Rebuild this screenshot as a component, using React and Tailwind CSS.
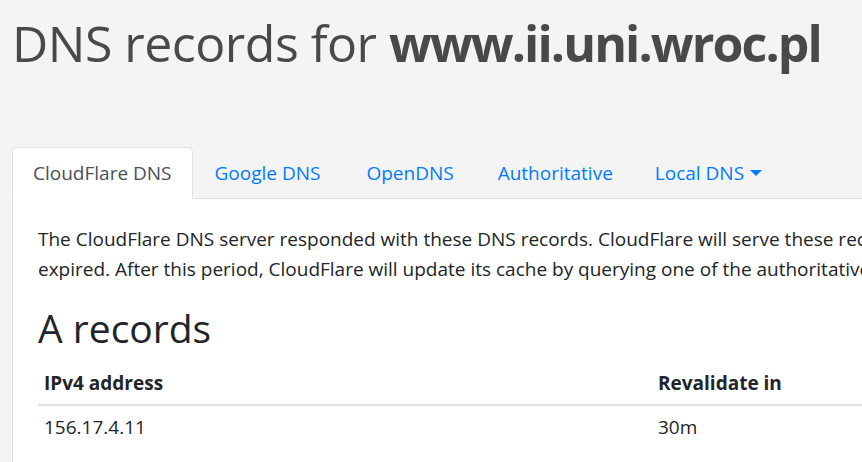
import React from "react";

export default function App() {
  return (
    <div
      className="w-full min-h-[462px] h-[462px] overflow-hidden bg-[#f4f4f4] text-[#212529]"
      style={{ fontFamily: '"Open Sans", "Noto Sans", sans-serif' }}
    >
      <div className="pl-[12px] w-[1200px]">
        <h1 className="pt-[15px] text-[50px] leading-[57px] text-[#494949] font-normal tracking-[-0.5px]">
          DNS records for <span className="font-bold tracking-[-1.9px]">www.ii.uni.wroc.pl</span>
        </h1>

        <ul className="mt-[75px] flex border-b border-[#dee2e6] text-[19px] leading-[30px]">
          <li className="-mb-px">
            <span className="block px-[20px] py-[10px] bg-white border border-[#dee2e6] border-b-white rounded-t-[5px] text-[#495057]">
              CloudFlare DNS
            </span>
          </li>
          <li className="-mb-px">
            <span className="block pl-[21px] pr-[23px] py-[10px] border border-transparent text-[#007bff]">
              Google DNS
            </span>
          </li>
          <li className="-mb-px">
            <span className="block pl-[21px] pr-[22px] py-[10px] border border-transparent text-[#007bff]">
              OpenDNS
            </span>
          </li>
          <li className="-mb-px">
            <span className="block px-[20px] py-[10px] border border-transparent text-[#007bff]">
              Authoritative
            </span>
          </li>
          <li className="-mb-px">
            <span className="flex items-center px-[20px] py-[10px] border border-transparent text-[#007bff]">
              Local DNS
              <span className="ml-[6px] inline-block w-0 h-0 border-l-[6px] border-r-[6px] border-t-[6px] border-l-transparent border-r-transparent border-t-[#007bff]" />
            </span>
          </li>
        </ul>

        <div className="bg-white border border-t-0 border-[#dee2e6] p-[25px] min-h-[300px]">
          <p className="text-[19px] leading-[30px] whitespace-nowrap mb-[20px]">
            The CloudFlare DNS server responded with these DNS records. CloudFlare will serve these records until their TTL has
            <br />
            expired. After this period, CloudFlare will update its cache by querying one of the authoritative name servers.
          </p>
          <h2 className="text-[39px] leading-[48px] font-medium mb-[10px]">A records</h2>
          <table className="w-[1100px] border-collapse text-[19px] leading-[30px]">
            <colgroup>
              <col className="w-[614px]" />
              <col />
            </colgroup>
            <thead>
              <tr>
                <th className="text-left font-bold p-[6px] border-b-2 border-[#dee2e6]">IPv4 address</th>
                <th className="text-left font-bold p-[6px] border-b-2 border-[#dee2e6]">Revalidate in</th>
              </tr>
            </thead>
            <tbody>
              <tr>
                <td className="p-[6px]">156.17.4.11</td>
                <td className="p-[6px]">30m</td>
              </tr>
            </tbody>
          </table>
        </div>
      </div>
    </div>
  );
}
